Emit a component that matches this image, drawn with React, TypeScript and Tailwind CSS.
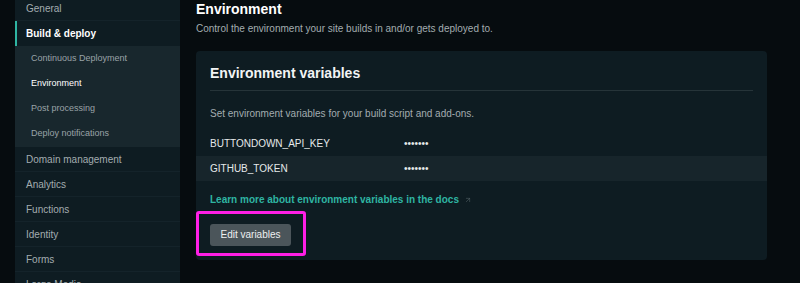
import { ArrowUpRight } from 'lucide-react';

const topItems = ['Domain management', 'Analytics', 'Functions', 'Identity', 'Forms', 'Large Media'];
const subItems = ['Continuous Deployment', 'Environment', 'Post processing', 'Deploy notifications'];

const variables = [
  { key: 'BUTTONDOWN_API_KEY', value: '•••••••' },
  { key: 'GITHUB_TOKEN', value: '•••••••' },
];

export default function App() {
  return (
    <div
      className="flex h-[283px] w-[800px] overflow-hidden bg-[#060c0f] text-white"
      style={{ fontFamily: '"Liberation Sans", Arial, sans-serif' }}
    >
      {/* Sidebar */}
      <nav className="-mt-[4px] ml-[15px] w-[165px] shrink-0 self-start bg-[#0e1c22] text-[10px]">
        <div className="flex h-[25px] items-center border-b border-[#14232a] pl-[11px] text-[#a3acb0]">General</div>
        <div className="flex h-[25px] items-center border-l-2 border-[#2fb5a3] pl-[9px] font-bold text-white">
          Build &amp; deploy
        </div>
        <div className="bg-[#18272d] pb-px text-[9px]">
          {subItems.map((item) => (
            <div
              key={item}
              className={`flex h-[25px] items-center pl-[16px] ${item === 'Environment' ? 'text-white' : 'text-[#9aa3a7]'}`}
            >
              {item}
            </div>
          ))}
        </div>
        {topItems.map((item) => (
          <div key={item} className="flex h-[25px] items-center border-b border-[#14232a] pl-[11px] text-[#a3acb0]">
            {item}
          </div>
        ))}
      </nav>

      {/* Main */}
      <main className="ml-[16px] w-[571px] shrink-0">
        <h1 className="mt-px text-[14px] leading-[17px] font-bold text-white">Environment</h1>
        <p className="mt-[4px] text-[10px] leading-[13px] text-[#a3acb0]">
          Control the environment your site builds in and/or gets deployed to.
        </p>

        <section className="mt-[16px] rounded-[4px] bg-[#0e1c22] pb-[4px]">
          <div className="px-[14px] pt-[14px]">
            <h2 className="text-[14px] leading-[17px] font-bold text-[#f2f4f5]">Environment variables</h2>
            <div className="mt-[8px] h-px bg-[#263439]" />
            <p className="mt-[16px] text-[10px] leading-[13px] text-[#a3acb0]">
              Set environment variables for your build script and add-ons.
            </p>
          </div>

          <div className="mt-[11px] text-[10px] text-[#e6e9ea]">
            {variables.map((v, i) => (
              <div
                key={v.key}
                className={`flex h-[25px] items-center px-[14px] ${i % 2 === 1 ? 'bg-[#17252b]' : ''}`}
              >
                <span className="w-[194px]">{v.key}</span>
                <span className="text-[10px]">{v.value}</span>
              </div>
            ))}
          </div>

          <div className="px-[14px]">
            <a className="mt-[12px] flex items-center gap-[5px] text-[10px] leading-[13px] font-bold text-[#2fb5a3]">
              Learn more about environment variables in the docs
              <ArrowUpRight size={8} strokeWidth={1.5} className="text-[#5d6a6f]" />
            </a>
          </div>

          <div className="mt-[5px] w-[110px] rounded-[3px] border-[3px] border-[#ff1fe6] py-[7px] pl-[11px]">
            <button className="h-[22px] w-[81px] rounded-[3px] bg-[#4b555a] text-[10px] text-[#eef0f1]">
              Edit variables
            </button>
          </div>
        </section>
      </main>
    </div>
  );
}
